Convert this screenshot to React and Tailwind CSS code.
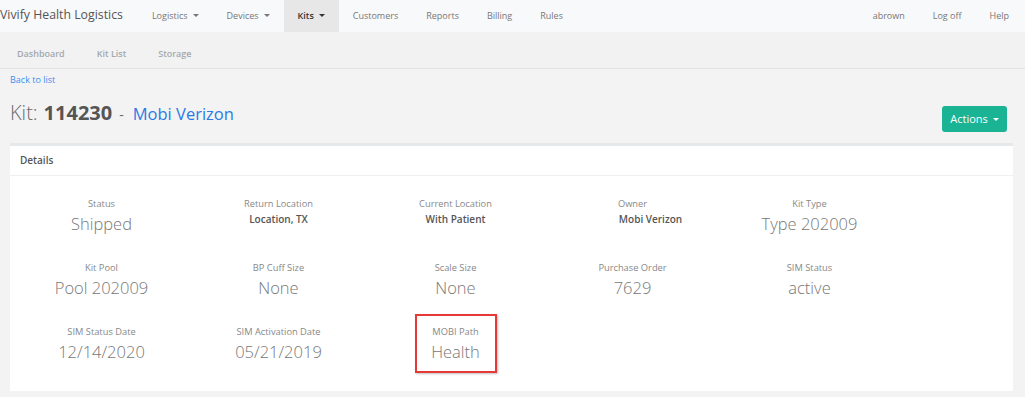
import React from "react";

const Caret = ({ color = "border-t-[#777]" }) => (
  <span className={`inline-block ml-[5px] align-middle w-0 h-0 border-x-[3px] border-x-transparent border-t-[3px] ${color}`} />
);

const navLeft = [
  { label: "Logistics", caret: true },
  { label: "Devices", caret: true },
  { label: "Kits", caret: true, active: true },
  { label: "Customers" },
  { label: "Reports" },
  { label: "Billing" },
  { label: "Rules" },
];

const Cell = ({ label, value, kind = "light", shift = 0, boxed = false }) => (
  <div className="relative w-[177px] h-[64px] flex flex-col items-center">
    {boxed && (
      <div className="absolute left-[48px] top-[-12px] w-[82px] h-[59px] border-2 border-[#e53935] shadow-[1px_1px_2px_rgba(0,0,0,0.25)]" />
    )}
    <div className="text-[9.3px] leading-[12px] text-[#888]">{label}</div>
    {kind === "light" ? (
      <div className="mt-[3px] text-[16.5px] leading-[22px] font-light text-[#777]">{value}</div>
    ) : (
      <div
        className={`mt-[2px] text-[10px] leading-[14px] font-semibold text-[#555] ${shift ? "pl-[36px]" : ""}`}
      >
        {value}
      </div>
    )}
  </div>
);

export default function App() {
  return (
    <div
      className="w-[1025px] h-[397px] bg-[#f3f3f4] text-[#676a6c] overflow-hidden"
      style={{ fontFamily: '"Open Sans", "Noto Sans", sans-serif' }}
    >
      {/* Top navbar */}
      <div className="h-[32px] bg-[#f8f9fa] flex items-stretch">
        <div className="flex items-center text-[12.3px] text-[#555] pr-[15px] pb-[1px]">Vivify Health Logistics</div>
        {navLeft.map((n) => (
          <div
            key={n.label}
            className={`flex items-center px-[14px] pb-[1px] text-[9px] ${
              n.active ? "bg-[#e7e7e7] text-[#333] font-semibold" : "text-[#777]"
            }`}
          >
            {n.label}
            {n.caret && <Caret color={n.active ? "border-t-[#333]" : "border-t-[#777]"} />}
          </div>
        ))}
        <div className="flex-1" />
        {["abrown", "Log off", "Help"].map((t) => (
          <div key={t} className="flex items-center px-[14px] pb-[1px] text-[9px] text-[#777]">
            {t}
          </div>
        ))}
        <div className="w-[2px]" />
      </div>

      {/* Sub nav */}
      <div className="h-[37px] bg-[#f2f2f2] border-b border-[#e3e3e3] flex items-start pl-[1px]">
        {["Dashboard", "Kit List", "Storage"].map((t) => (
          <div key={t} className="pt-[16px] px-[16px] text-[9px] leading-[12px] font-semibold text-[#a3a9ae]">
            {t}
          </div>
        ))}
      </div>

      {/* Page heading */}
      <div className="px-[10px] flex flex-col">
        <a className="mt-[5px] text-[9px] leading-[12px] text-[#3c8ef0]">Back to list</a>
        <div className="flex items-start justify-between mt-[13px]">
          <div className="flex items-baseline">
            <span className="text-[20px] leading-[28px] font-light text-[#676a6c]">Kit:</span>
            <span className="ml-[6px] text-[20px] leading-[28px] font-bold text-[#555]">114230</span>
            <span className="ml-[7px] text-[14px] text-[#676a6c]">-</span>
            <span className="ml-[9px] text-[16.5px] text-[#2a7be4]">Mobi Verizon</span>
          </div>
          <button className="mt-[7px] mr-[8px] h-[26px] w-[65px] rounded-[3px] bg-[#1ab394] text-white text-[11px] flex items-center justify-center">
            Actions
            <Caret color="border-t-white" />
          </button>
        </div>
      </div>

      {/* Card */}
      <div className="mt-[11px] ml-[10px] w-[1003px] bg-white border-t-[3px] border-[#e6e9ec]">
        <div className="h-[30px] border-b border-[#eef0f2] flex items-center px-[10px] text-[10px] font-semibold text-[#555]">
          Details
        </div>
        <div className="pt-[22px] pl-[3px] pb-[1px]">
          <div className="flex">
            <Cell label="Status" value="Shipped" />
            <Cell label="Return Location" value="Location, TX" kind="bold" />
            <Cell label="Current Location" value="With Patient" kind="bold" />
            <Cell label="Owner" value="Mobi Verizon" kind="bold" shift />
            <Cell label="Kit Type" value="Type 202009" />
          </div>
          <div className="flex">
            <Cell label="Kit Pool" value="Pool 202009" />
            <Cell label="BP Cuff Size" value="None" />
            <Cell label="Scale Size" value="None" />
            <Cell label="Purchase Order" value="7629" />
            <Cell label="SIM Status" value="active" />
          </div>
          <div className="flex">
            <Cell label="SIM Status Date" value="12/14/2020" />
            <Cell label="SIM Activation Date" value="05/21/2019" />
            <Cell label="MOBI Path" value="Health" boxed />
          </div>
        </div>
      </div>
    </div>
  );
}
